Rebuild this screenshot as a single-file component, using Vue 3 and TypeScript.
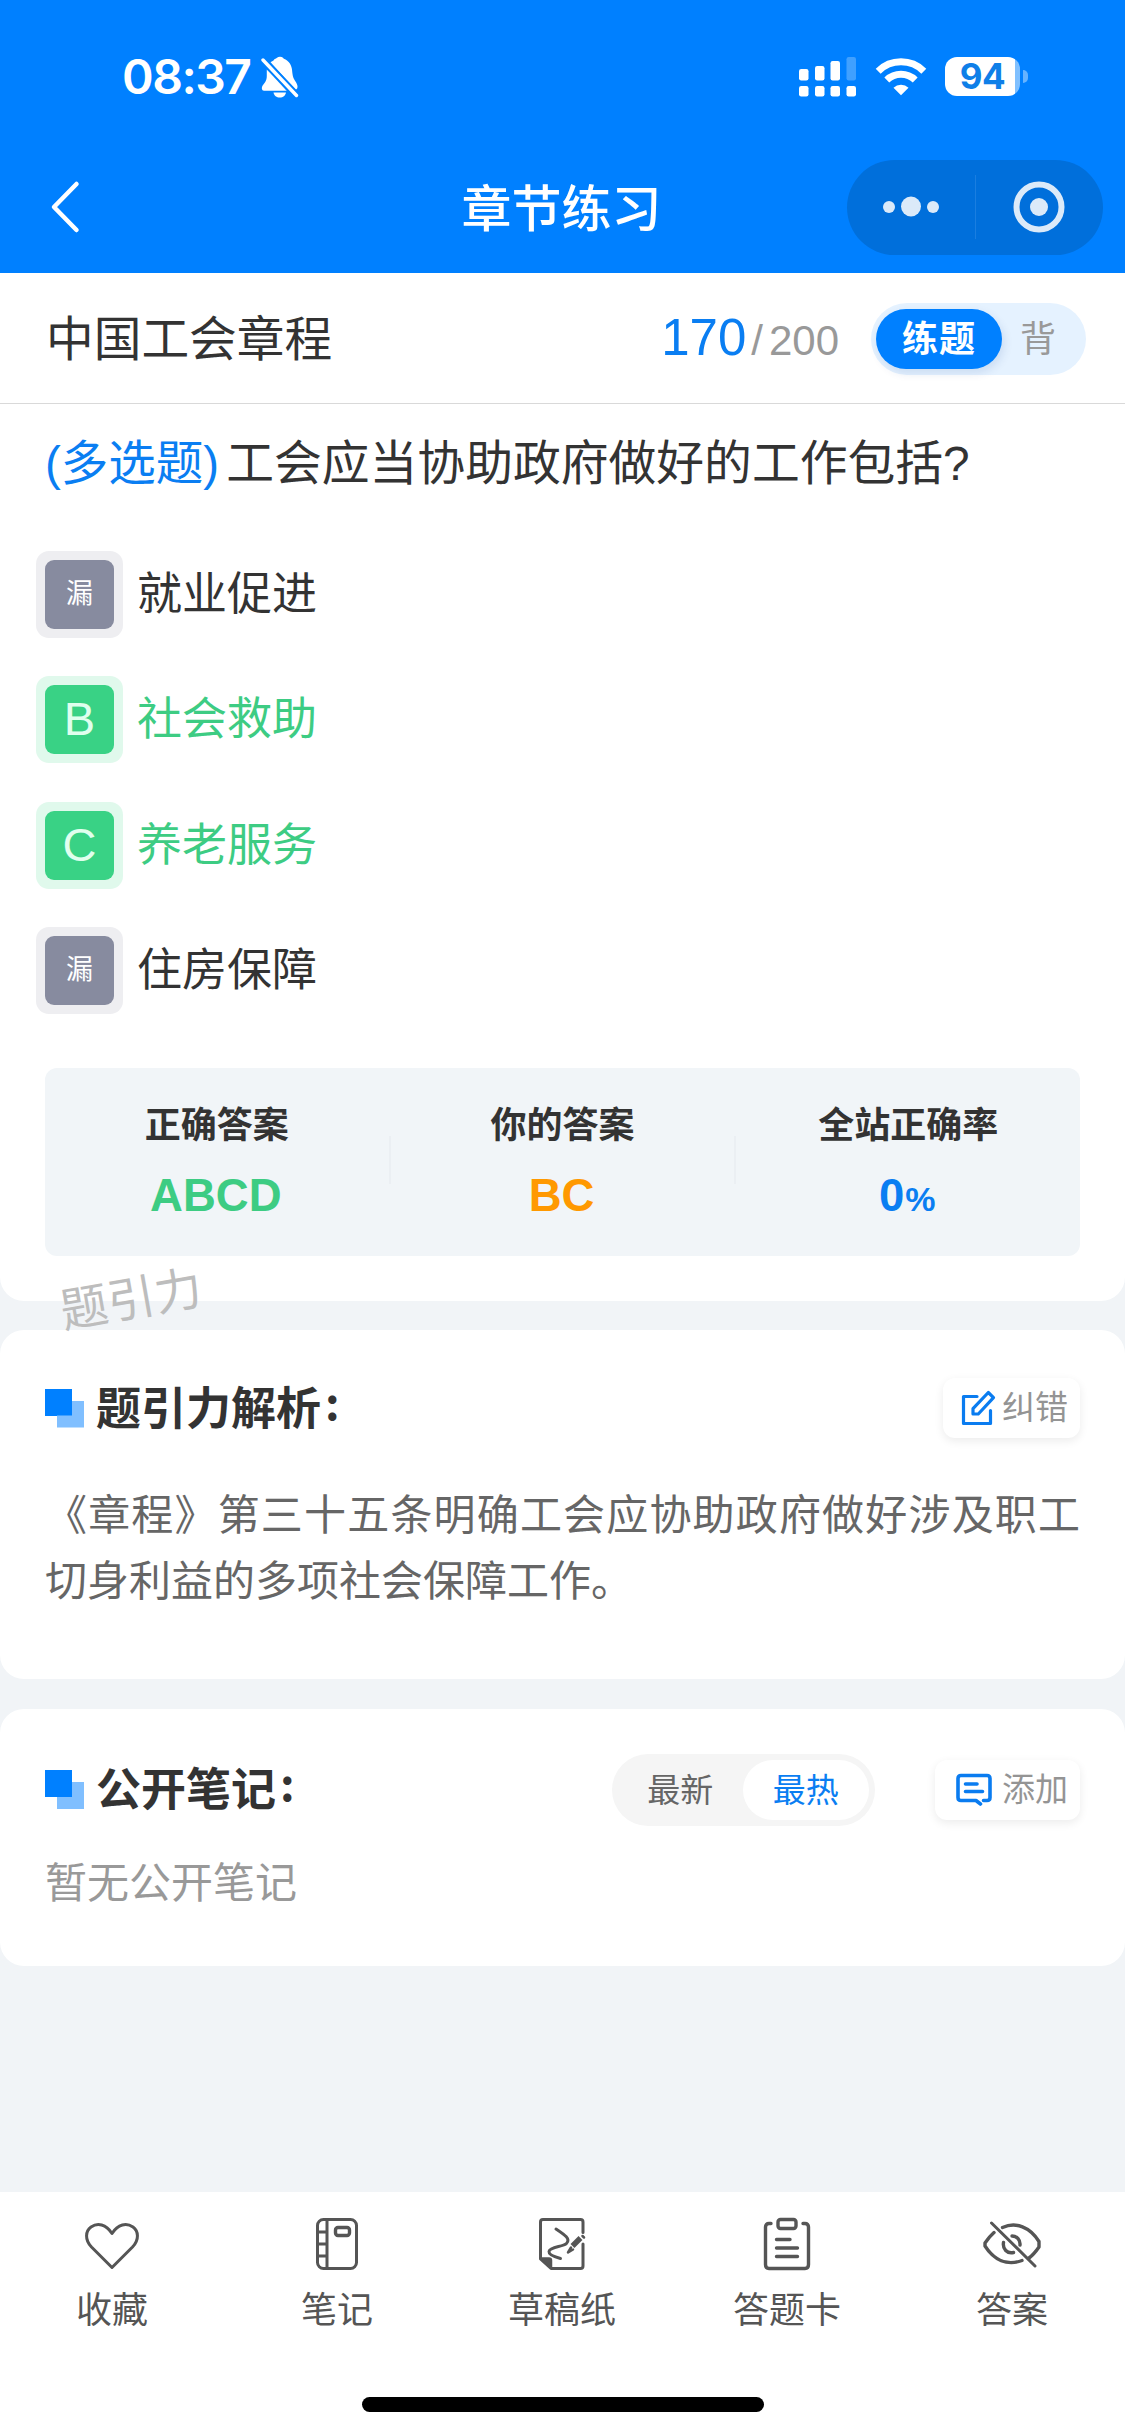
<script setup lang="ts">
interface Option { key: string; label: string; state: 'missed' | 'right' }
interface Tab { id: string; label: string }

const options: Option[] = [
  { key: '漏', label: '就业促进', state: 'missed' },
  { key: 'B', label: '社会救助', state: 'right' },
  { key: 'C', label: '养老服务', state: 'right' },
  { key: '漏', label: '住房保障', state: 'missed' },
]

const tabs: Tab[] = [
  { id: 'fav', label: '收藏' },
  { id: 'note', label: '笔记' },
  { id: 'draft', label: '草稿纸' },
  { id: 'card', label: '答题卡' },
  { id: 'answer', label: '答案' },
]
</script>

<template>
  <div class="page">
    <header class="top">
      <div class="status">
        <div class="status-left">
          <span class="time">08:37</span>
          <svg class="bell" width="38" height="42" viewBox="0 0 38 42">
            <path d="M12.5 4.5 C13.5 2.5 15.5 2.8 16 1.8 C17.5 0.3 20.5 0.3 22 1.8 C22.5 2.8 24 3 26 4.5 C31 8.5 31 13 31.5 18 C32 24 36.5 26.500 36.500 30.500 C36.500 32 36 33 35 33.500 L9 6.500 Z" fill="#fff" />
            <path d="M5.800 13.500 L27.500 34.800 H3 C0.500 34.800 0.500 31.500 1.500 29.800 C3.500 27 5.800 25 5.800 20 Z" fill="#fff" />
            <path d="M12.500 36.500 H25 C24.500 39.500 22 41.500 18.800 41.500 C15.500 41.500 13 39.500 12.500 36.500 Z" fill="#fff" />
            <path d="M1.500 3 L36 40.500" stroke="#0080ff" stroke-width="7.500" />
            <path d="M2 4 L35.500 39.500" stroke="#fff" stroke-width="3.400" stroke-linecap="round" />
          </svg>
        </div>
        <div class="status-right">
          <svg width="58" height="40" viewBox="0 0 58 40" fill="#fff">
            <rect x="0" y="12" width="9.500" height="11.500" rx="2.200" />
            <rect x="16" y="9" width="9.500" height="14.500" rx="2.200" />
            <rect x="31.500" y="4" width="9.500" height="19.500" rx="2.200" />
            <rect x="47.500" y="0" width="9.500" height="23.500" rx="2.200" opacity="0.25" />
            <rect x="0" y="29" width="9.500" height="10.500" rx="2.200" />
            <rect x="16" y="29" width="9.500" height="10.500" rx="2.200" />
            <rect x="31.500" y="29" width="9.500" height="10.500" rx="2.200" />
            <rect x="47.500" y="29" width="9.500" height="10.500" rx="2.200" />
          </svg>
          <svg class="wifi" width="52" height="38" viewBox="0 0 52 38">
            <path d="M3.200 13.200 A32.500 32.500 0 0 1 48.800 13.200" fill="none" stroke="#fff" stroke-width="7" />
            <path d="M11.800 22 A20.500 20.500 0 0 1 40.200 22" fill="none" stroke="#fff" stroke-width="7" />
            <path d="M26 37.300 L18.500 29.800 A10.800 10.800 0 0 1 33.500 29.800 Z" fill="#fff" />
          </svg>
          <div class="battery"><span>94</span></div>
          <i class="battery-tip"></i>
        </div>
      </div>
      <nav class="nav">
        <svg class="back" width="30" height="54" viewBox="0 0 30 54">
          <path d="M26.500 4 L4 27 L26.500 50" fill="none" stroke="#fff" stroke-width="4.500" stroke-linecap="round" stroke-linejoin="round" />
        </svg>
        <h1>章节练习</h1>
        <div class="capsule">
          <div class="cap-half">
            <svg width="60" height="24" viewBox="0 0 60 24" fill="#fff">
              <circle cx="8" cy="12" r="6" /><circle cx="30" cy="11.500" r="10" /><circle cx="52" cy="12" r="6" />
            </svg>
          </div>
          <i></i>
          <div class="cap-half">
            <svg width="52" height="52" viewBox="0 0 52 52">
              <circle cx="26" cy="26" r="22.500" fill="none" stroke="#fff" stroke-width="6" />
              <circle cx="26" cy="26" r="9" fill="#fff" />
            </svg>
          </div>
        </div>
      </nav>
    </header>

    <section class="question">
      <div class="chapter">
        <span class="chapter-name">中国工会章程</span>
        <div class="progress"><b>170</b><span class="slash">/</span><span>200</span></div>
        <div class="mode"><span class="mode-on">练题</span><span class="mode-off">背</span></div>
      </div>
      <p class="stem"><span class="kind">(多选题)</span>工会应当协助政府做好的工作包括?</p>
      <ul class="options">
        <li v-for="(o, i) in options" :key="i" :class="o.state">
          <div class="ring"><span class="badge">{{ o.key }}</span></div><span class="label">{{ o.label }}</span>
        </li>
      </ul>
      <div class="stats">
        <div class="stat"><h3>正确答案</h3><strong class="green">ABCD</strong></div>
        <i></i>
        <div class="stat"><h3>你的答案</h3><strong class="orange">BC</strong></div>
        <i></i>
        <div class="stat"><h3>全站正确率</h3><strong class="blue">0<small>%</small></strong></div>
      </div>
      <span class="watermark">题引力</span>
    </section>

    <section class="analysis">
      <div class="head">
        <i class="mark"></i>
        <h2>题引力解析<em>:</em></h2>
        <button class="chip">
          <svg width="36" height="36" viewBox="0 0 36 36" fill="none" stroke="#0a7cf0" stroke-width="3.200" stroke-linejoin="round" stroke-linecap="round">
            <path d="M17 6.500 H3.500 V33.500 H30.500 V20.500" />
            <path d="M28.300 2.500 L33.500 7.700 L18.300 24 H13 V18.700 Z" />
          </svg>
          <span>纠错</span>
        </button>
      </div>
      <p>《章程》第三十五条明确工会应协助政府做好涉及职工切身利益的多项社会保障工作。</p>
    </section>

    <section class="notes">
      <div class="head">
        <i class="mark"></i>
        <h2>公开笔记<em>:</em></h2>
        <div class="sort"><span>最新</span><span class="sort-on">最热</span></div>
        <button class="chip wide">
          <svg width="38" height="34" viewBox="0 0 38 34" fill="none" stroke="#0a7cf0" stroke-width="3.600" stroke-linejoin="round" stroke-linecap="round">
            <path d="M28.500 27.500 H32 Q35 27.500 35 24.500 V5.500 Q35 2.500 32 2.500 H6 Q3 2.500 3 5.500 V24.500 Q3 27.500 6 27.500 H21 L25.500 31" />
            <path d="M10.500 11 H22 M10.500 18.500 H27.500" />
          </svg>
          <span>添加</span>
        </button>
      </div>
      <p>暂无公开笔记</p>
    </section>

    <footer class="tabbar">
      <div class="tabs">
        <div v-for="t in tabs" :key="t.id" class="tab">
          <svg width="60" height="56" viewBox="0 0 60 56" fill="none" stroke="#555" stroke-width="3" stroke-linejoin="round" stroke-linecap="round">
            <template v-if="t.id === 'fav'">
              <path d="M30 51.500 L9.500 31 C2.500 23.500 3.500 15 9 11 C15.500 6.500 24 8 30 17.500 C36 8 44.500 6.500 51 11 C56.500 15 57.500 23.500 50.500 31 Z" />
            </template>
            <template v-else-if="t.id === 'note'">
              <rect x="10.500" y="3.500" width="39" height="49" rx="6" />
              <path d="M20 3.500 V52.500 M10.500 16 H19 M10.500 28 H19 M10.500 40 H19" />
              <rect x="28.500" y="11.500" width="14" height="8" rx="2.500" stroke-width="3.400" />
            </template>
            <template v-else-if="t.id === 'draft'">
              <path d="M51 16.500 V6 Q51 3.500 48.500 3.500 H11 Q8.500 3.500 8.500 6 V43 L19 52.500 H48.500 Q51 52.500 51 50 V28" />
              <path d="M8.500 42 H17 Q19.500 42 19.500 44.500 V52.500 Z" fill="#555" stroke-width="1.500" />
              <path d="M24 13 C33 19 39 23 34.500 27.500 C31 31 18 30.500 17 35.500 C16.500 38.500 23 41 28.500 42.500" />
              <path d="M48.500 22 L40.500 30" stroke-width="5.500" stroke-linecap="butt" />
              <path d="M50.500 20 L52 21.500 M39 31.500 L36 36.500 L41 33.500" stroke-width="2.500" />
            </template>
            <template v-else-if="t.id === 'card'">
              <path d="M14 7.500 H12 Q8.500 7.500 8.500 11 V48.500 Q8.500 52.500 12 52.500 H48 Q51.500 52.500 51.500 48.500 V11 Q51.500 7.500 48 7.500 H46" stroke-width="3.400" />
              <rect x="21" y="3.500" width="18" height="9" rx="2.500" stroke-width="3.400" />
              <path d="M19.500 23.500 H33 M19.500 32 H40.500 M19.500 40.500 H40.500" stroke-width="3.400" />
            </template>
            <template v-else>
              <path d="M20.500 11.500 C34 5.500 48 11 57 25.500 V31 C53.500 36 50.500 39.500 47 42" stroke-width="3.400" />
              <path d="M12 16.500 C8 20 5 24 3 27 V30 C12 44 25 50 40 44.500" stroke-width="3.400" />
              <path d="M30 20 C35 20 38.500 24 38 29 M21.500 26.500 C20.500 33 25 38 31.500 36.500" stroke-width="3.400" />
              <path d="M9.500 7 L53 50" />
            </template>
          </svg>
          <span>{{ t.label }}</span>
        </div>
      </div>
      <i class="home"></i>
    </footer>
  </div>
</template>

<style>
body { margin: 0; }
</style>

<style scoped>
.page {
  width: 1125px;
  height: 2436px;
  display: flex;
  flex-direction: column;
  background: #f1f4f7;
  font-family: "Liberation Sans", "Noto Sans CJK SC", sans-serif;
  color: #333;
  overflow: hidden;
}
h1, h2, h3, p, ul { margin: 0; padding: 0; font-weight: 400; }
svg { display: block; flex: none; }
i, em { font-style: normal; }

.top { height: 273px; background: #0080ff; color: #fff; flex: none; }
.status { height: 152px; box-sizing: border-box; padding: 1px 97px 0 122px; display: flex; justify-content: space-between; align-items: center; }
.status-left, .status-right { display: flex; align-items: center; }
.time { font: 600 48px/56px Inter, sans-serif; width: 139px; letter-spacing: -1.5px; }
.wifi { margin: 0 18px; }
.battery {
  width: 75px; height: 39px; border-radius: 12px; line-height: 39px; text-align: center;
  background: linear-gradient(90deg, #fff 70px, #80c0ff 70px);
}
.battery span { font: 700 35px/38px Inter, sans-serif; color: #0f7fe8; letter-spacing: -0.5px; display: block; }
.battery-tip { width: 5px; height: 13px; margin-left: 3px; background: #66b3ff; border-radius: 0 6px 6px 0; }
.nav { height: 110px; display: flex; align-items: center; justify-content: space-between; padding: 0 22px 0 50px; position: relative; }
.nav h1 { position: absolute; left: 0; right: 2px; top: 3px; text-align: center; font-size: 50px; line-height: 110px; font-weight: 500; pointer-events: none; }
.capsule { width: 256px; height: 95px; border-radius: 48px; background: #006fdb; display: flex; align-items: center; }
.capsule > i { width: 1px; height: 64px; background: #1a7ee0; }
.cap-half { flex: 1; display: flex; justify-content: center; }
.cap-half svg { opacity: 0.86; }

.question { position: relative; height: 1028px; background: #fff; border-radius: 0 0 24px 24px; flex: none; }
.chapter { height: 131px; box-sizing: border-box; border-bottom: 1px solid #d9d9d9; padding: 0 39px 0 46px; display: flex; align-items: center; }
.chapter-name { font-size: 47.700px; line-height: 70px; padding-top: 3px; flex: 1; }
.progress { display: flex; align-items: baseline; color: #999; font-size: 42px; line-height: 70px; padding-top: 3px; margin-right: 32px; }
.progress b { font-weight: 400; font-size: 51px; color: #0a7ef2; }
.slash { margin: 0 6px 0 5px; }
.mode { width: 215px; height: 72px; margin-top: 1px; box-sizing: border-box; padding: 6px 5px; border-radius: 36px; background: #e5f2ff; display: flex; font-size: 36px; line-height: 62px; }
.mode-on { width: 126px; height: 60px; border-radius: 30px; background: #0080ff; color: #fff; font-weight: 700; text-align: center; letter-spacing: 1px; box-shadow: 2px 4px 10px rgba(0, 60, 140, 0.12); }
.mode-off { width: 72px; text-align: center; color: #999; }
.stem { height: 116px; padding-top: 1px; line-height: 117px; padding-left: 45px; font-size: 47.800px; white-space: nowrap; }
.kind { color: #0a7ef2; margin-right: 7px; font-size: 47.500px; }
.options { list-style: none; padding: 30px 0 0 36px; }
.options li { height: 87px; margin-bottom: 38.300px; display: flex; align-items: center; gap: 14px; font-size: 45px; }
.label { line-height: 60px; padding-top: 1px; }
.ring { padding: 9px; border-radius: 13px; background: #eeeef1; }
.badge { display: block; width: 69px; height: 69px; line-height: 69px; border-radius: 9px; background: #878b9f; text-align: center; color: #fff; font-size: 27px; }
.right { color: #3dcc83; }
.right .ring { background: #e0f9ec; }
.right .badge { background: #39d285; font-size: 47px; line-height: 68px; color: #e0ffee; }
.stats { margin: 54px 45px 0 45px; height: 188px; border-radius: 12px; background: #f1f5f8; display: flex; align-items: center; }
.stats > i { width: 2px; height: 48px; margin-top: -4px; background: #ebeff3; }
.stat { flex: 1; text-align: center; align-self: flex-start; padding-top: 33px; }
.stat h3 { font-size: 36px; line-height: 50px; font-weight: 700; }
.stat strong { display: block; margin: 20px 2px 0 0; font-size: 45.500px; line-height: 50px; }
.stat small { font-size: 34px; margin-left: 1px; }
.green { color: #3dcc83; }
.orange { color: #ff9900; }
.blue { color: #0a7ef2; }
.watermark { position: absolute; left: 60px; top: 992px; font-size: 47.500px; line-height: 70px; color: #bdbdbd; transform: rotate(-10deg); z-index: 2; }

.analysis, .notes { background: #fff; border-radius: 24px; box-sizing: border-box; flex: none; padding: 0 45px; }
.analysis { margin-top: 29px; height: 349px; padding-top: 42px; }
.notes { margin-top: 30px; height: 257px; padding-top: 45px; }
.head { display: flex; align-items: center; height: 72px; }
.mark { width: 27px; height: 27px; background: #0080ff; margin: -12px 24px 0 0; position: relative; z-index: 1; }
.mark::after { content: ""; position: absolute; left: 12px; top: 12px; width: 27px; height: 27px; background: #80bfff; clip-path: polygon(15px 0, 100% 0, 100% 100%, 0 100%, 0 15px, 15px 15px); }
.head h2 { font-size: 45px; line-height: 72px; font-weight: 700; flex: 1; }
.head em { font-family: "Noto Sans CJK SC", sans-serif; margin-left: 4px; position: relative; top: -5px; }
.chip { width: 137px; height: 60px; padding: 0 0 0 17px; border: 0; border-radius: 12px; background: #fff; box-shadow: 0 3px 10px rgba(0, 0, 0, 0.08); display: flex; align-items: center; gap: 6px; color: #949494; font-family: inherit; font-size: 33px; line-height: 60px; }
.chip.wide { width: 145px; padding-left: 20px; gap: 9px; }
.analysis p { margin-top: 39px; font-size: 42px; line-height: 66px; color: #666; text-align: justify; }
.sort { width: 263px; height: 72px; box-sizing: border-box; padding: 6px; border-radius: 36px; background: #f5f5f5; display: flex; margin-right: 60px; font-size: 33px; line-height: 61px; color: #666; text-align: center; }
.sort span { width: 125px; height: 60px; border-radius: 30px; }
.sort .sort-on { background: #fff; color: #0a7ef2; width: 127px; }
.notes .mark { margin-top: -13px; }
.notes h2 { padding-bottom: 2px; }
.notes p { margin-top: 25px; font-size: 42px; line-height: 66px; color: #999; }

.tabbar { margin-top: auto; height: 244px; background: #fff; flex: none; display: flex; flex-direction: column; align-items: center; }
.tabs { width: 100%; display: flex; height: 205px; }
.tab { flex: 1; display: flex; flex-direction: column; align-items: center; padding: 24px 1px 0 0; font-size: 36px; line-height: 50px; color: #555; gap: 14px; }
.home { width: 402px; height: 15px; border-radius: 8px; background: #000; }
</style>
